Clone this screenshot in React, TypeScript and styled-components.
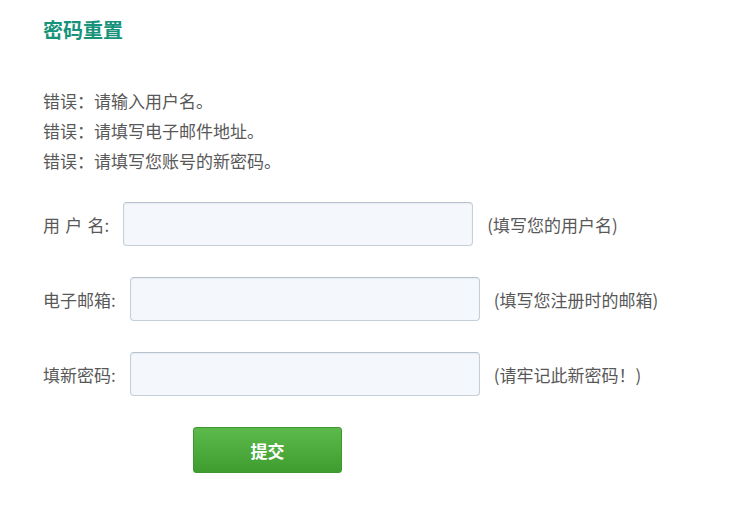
import { createGlobalStyle, styled } from 'styled-components'

const GlobalStyle = createGlobalStyle`
  html, body {
    margin: 0;
    padding: 0;
    background: #ffffff;
  }
  body {
    font-family: "Noto Sans CJK SC", "Noto Sans", "Liberation Sans", sans-serif;
    color: #555555;
  }
`

const errors = ['错误：请输入用户名。', '错误：请填写电子邮件地址。', '错误：请填写您账号的新密码。']

const fields = [
  { id: 'username', label: '用 户 名:', hint: '(填写您的用户名)', type: 'text' },
  { id: 'email', label: '电子邮箱:', hint: '(填写您注册时的邮箱)', type: 'email' },
  { id: 'password', label: '填新密码:', hint: '(请牢记此新密码！)', type: 'password' },
]

function App() {
  return (
    <>
      <GlobalStyle />
      <Page>
        <Title>密码重置</Title>
        <ErrorList>
          {errors.map((msg) => (
            <li key={msg}>{msg}</li>
          ))}
        </ErrorList>
        <Form onSubmit={(e) => e.preventDefault()}>
          {fields.map((field) => (
            <FieldRow key={field.id}>
              <Label htmlFor={field.id}>{field.label}</Label>
              <TextInput id={field.id} type={field.type} />
              <Hint>{field.hint}</Hint>
            </FieldRow>
          ))}
          <SubmitButton type="submit">提交</SubmitButton>
        </Form>
      </Page>
    </>
  )
}

export default App

const Page = styled.div`
  padding: 18px 43px;
`

const Title = styled.h2`
  margin: 0;
  font-size: 20px;
  line-height: 24px;
  font-weight: 700;
  color: #17937b;
`

const ErrorList = styled.ul`
  list-style: none;
  margin: 44px 0 0;
  padding: 0;
  font-size: 17px;
  line-height: 30px;
  color: #585858;
`

const Form = styled.form`
  margin-top: 26px;
  display: flex;
  flex-direction: column;
  gap: 31px;
`

const FieldRow = styled.div`
  display: flex;
  align-items: center;
  height: 44px;
`

const Label = styled.label`
  font-size: 17px;
  color: #585858;
  margin-right: 14px;
  word-spacing: 1.5px;
  white-space: pre;
`

const TextInput = styled.input`
  box-sizing: border-box;
  width: 350px;
  height: 44px;
  padding: 0 10px;
  border: 1px solid #c4cfd9;
  border-top-color: #b4c0cc;
  border-radius: 4px;
  background: #f4f8fc;
  box-shadow: inset 0 1px 2px rgba(0, 0, 0, 0.05);
  font-size: 16px;
  outline: none;
`

const Hint = styled.span`
  margin-left: 14px;
  font-size: 17px;
  color: #585858;
`

const SubmitButton = styled.button`
  align-self: flex-start;
  margin-left: 150px;
  width: 149px;
  height: 46px;
  border: 1px solid #3f9530;
  border-radius: 3px;
  background: linear-gradient(#5cb94c, #3f9d30);
  color: #ffffff;
  font-family: "Noto Sans CJK SC", sans-serif;
  font-size: 17px;
  font-weight: 700;
  cursor: pointer;
`
